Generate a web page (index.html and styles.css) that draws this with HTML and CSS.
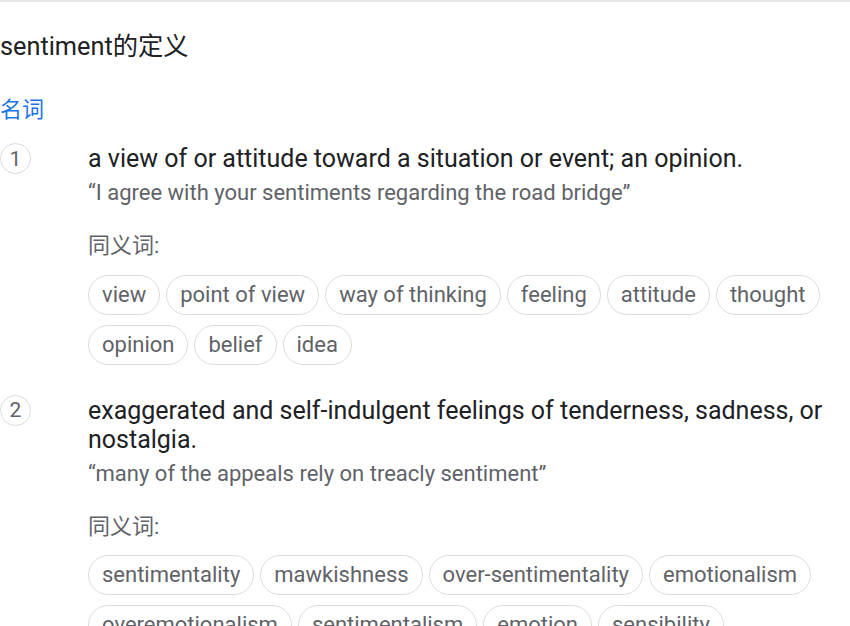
FILE: index.html
```html
<!DOCTYPE html>
<html lang="zh">
<head>
<meta charset="utf-8">
<link rel="stylesheet" href="styles.css">
</head>
<body>
<div class="page">
  <div class="title">sentiment的定义</div>
  <div class="pos">名词</div>

  <div class="entry">
    <div class="num">1</div>
    <div class="body">
      <div class="def">a view of or attitude toward a situation or event; an opinion.</div>
      <div class="example">“I agree with your sentiments regarding the road bridge”</div>
      <div class="syn-label">同义词:</div>
      <div class="chips">
        <span class="chip">view</span>
        <span class="chip">point of view</span>
        <span class="chip">way of thinking</span>
        <span class="chip">feeling</span>
        <span class="chip">attitude</span>
        <span class="chip">thought</span>
        <span class="chip">opinion</span>
        <span class="chip">belief</span>
        <span class="chip">idea</span>
      </div>
    </div>
  </div>

  <div class="entry">
    <div class="num">2</div>
    <div class="body">
      <div class="def">exaggerated and self-indulgent feelings of tenderness, sadness, or nostalgia.</div>
      <div class="example">“many of the appeals rely on treacly sentiment”</div>
      <div class="syn-label">同义词:</div>
      <div class="chips">
        <span class="chip">sentimentality</span>
        <span class="chip">mawkishness</span>
        <span class="chip">over-sentimentality</span>
        <span class="chip">emotionalism</span>
        <span class="chip">overemotionalism</span>
        <span class="chip">sentimentalism</span>
        <span class="chip">emotion</span>
        <span class="chip">sensibility</span>
      </div>
    </div>
  </div>
</div>
</body>
</html>
```
FILE: styles.css
```css
html, body {
  margin: 0;
  padding: 0;
  background: #fff;
}
body {
  font-family: Roboto, "Noto Sans CJK SC", sans-serif;
  overflow: hidden;
  height: 626px;
}
.page {
  border-top: 2px solid #e6e6e6;
}
.title {
  margin-top: 30px;
  font-size: 25.3px;
  line-height: 30px;
  color: #202124;
}
.pos {
  margin-top: 35px;
  font-size: 22px;
  line-height: 26px;
  color: #1a73e8;
}
.entry {
  display: grid;
  grid-template-columns: 88px 1fr;
  margin-top: 20px;
}
.entry + .entry {
  margin-top: 30px;
}
.num {
  width: 29px;
  height: 29px;
  border: 1px solid #dadce0;
  border-radius: 50%;
  box-sizing: content-box;
  display: flex;
  align-items: center;
  justify-content: center;
  font-size: 21px;
  color: #5f6368;
}
.def {
  font-size: 25px;
  line-height: 29px;
  color: #202124;
  padding-top: 1px;
}
.example {
  margin-top: 7px;
  font-size: 22px;
  line-height: 26px;
  color: #5f6368;
}
.syn-label {
  margin-top: 27px;
  font-size: 22px;
  line-height: 26px;
  color: #5f6368;
}
.chips {
  margin-top: 15.5px;
  display: flex;
  flex-wrap: wrap;
  gap: 10px 6px;
}
.chip {
  height: 38px;
  line-height: 38px;
  padding: 0 13px;
  border: 1px solid #dadce0;
  border-radius: 20px;
  font-size: 22px;
  color: #5f6368;
  white-space: nowrap;
}
```
